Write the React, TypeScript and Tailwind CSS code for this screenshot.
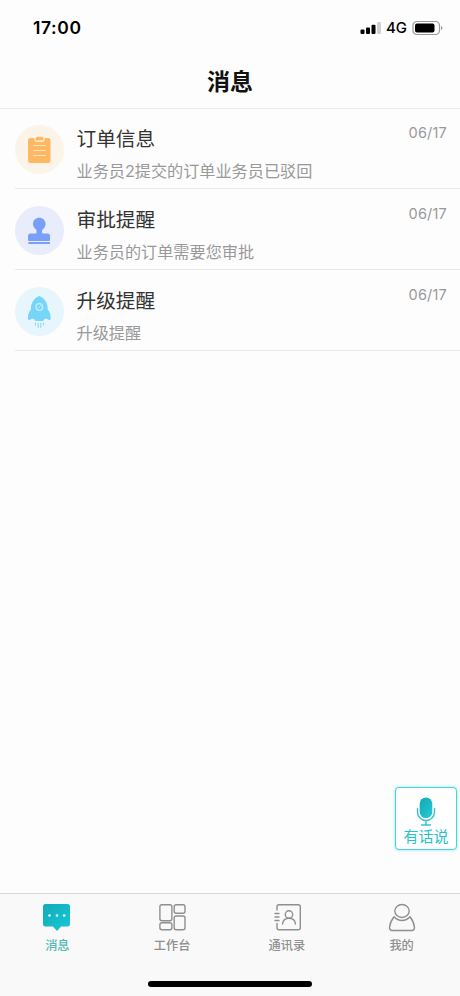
import React from 'react';

interface Message {
  title: string;
  summary: string;
  date: string;
  circle: string;
  icon: React.ReactNode;
}

interface TabProps {
  label: string;
  active?: boolean;
  children: React.ReactNode;
}

const OrderIcon = () => (
  <svg width="49" height="49" viewBox="0 0 49 49" fill="none">
    <rect x="13" y="13" width="22.500" height="25" rx="2.500" fill="#fdb863" />
    <path d="M20 12.500v2.200q0 1.500 1.500 1.500h6q1.500 0 1.500-1.500V12.500" stroke="#fdf4e6" strokeWidth="1.200" />
    <rect x="21" y="11.800" width="7" height="3" rx="1" fill="#fdb863" />
    <path d="M18.500 20.500h12M18.500 25.500h12M18.500 30.500h12" stroke="#fee3bd" strokeWidth="1.200" strokeLinecap="round" />
  </svg>
);

const StampIcon = () => (
  <svg width="49" height="49" viewBox="0 0 49 49" fill="#7a9ffa">
    <path d="M24.300 11.800c-3.600 0-6.300 2.700-6.300 6.200 0 2.400 1.300 4.100 2.700 5.200.9.800 1.100 1.700.8 2.700l-.3 1.600H15.500a2.500 2.500 0 0 0-2.500 2.500V34q0 1 1 1H34q1 0 1-1v-4a2.500 2.500 0 0 0-2.500-2.500h-5.100l-.3-1.600c-.3-1-.1-1.900.8-2.700 1.400-1.100 2.700-2.800 2.700-5.200 0-3.500-2.700-6.200-6.300-6.200z" />
    <rect x="13.300" y="36" width="21.700" height="2" rx=".5" />
  </svg>
);

const RocketIcon = () => (
  <svg width="49" height="49" viewBox="0 0 49 49" fill="none">
    <path
      d="M24.300 9c-4.600 1.800-8.300 6.300-8.400 12v1.500c-2 2.200-3 5.200-3 8.500 0 1.700.9 2.600 2.100 1.700 1.200-1 2.400-1.300 3.700-.9l1.800 2.200h7.600l1.800-2.200c1.300-.4 2.500-.1 3.700.9 1.200.9 2.100 0 2.100-1.700 0-3.300-1-6.300-3-8.500V21c-.1-5.700-3.800-10.200-8.400-12z"
      fill="#78d5fa"
    />
    <circle cx="24.300" cy="20" r="3.300" stroke="#c5effc" strokeWidth="1.300" />
    <path d="m22.700 21.500 3.300-3" stroke="#b4e9fb" />
    <path d="M20.400 36v2M23.200 36v4.300M25.800 36v4.300M28.500 36v2" stroke="#8edcf8" strokeWidth="1.200" strokeLinecap="round" />
  </svg>
);

const messages: Message[] = [
  {
    title: '订单信息',
    summary: '业务员2提交的订单业务员已驳回',
    date: '06/17',
    circle: 'bg-[#fcf4e8]',
    icon: <OrderIcon />,
  },
  {
    title: '审批提醒',
    summary: '业务员的订单需要您审批',
    date: '06/17',
    circle: 'bg-[#e8ecfb]',
    icon: <StampIcon />,
  },
  {
    title: '升级提醒',
    summary: '升级提醒',
    date: '06/17',
    circle: 'bg-[#e7f6fd]',
    icon: <RocketIcon />,
  },
];

const StatusBar = () => (
  <div className="flex h-14 shrink-0 items-center justify-between pl-[33px] pr-[17px] font-['Inter'] text-black">
    <span className="text-[17.500px] font-semibold tracking-[0.600px]">17:00</span>
    <div className="flex items-center">
      <svg width="21" height="14" viewBox="0 0 21 14">
        <rect x="0.500" y="8.500" width="4" height="4.500" rx="1" />
        <rect x="6" y="6.500" width="4" height="6.500" rx="1" />
        <rect x="11.500" y="3.800" width="4" height="9.200" rx="1" />
        <rect x="17" y="1" width="4" height="12" rx="1" fill="#cfcfcf" />
      </svg>
      <span className="ml-[5px] text-[15px] font-medium leading-5">4G</span>
      <svg className="ml-[5px]" width="31" height="16" viewBox="0 0 31 16" fill="none">
        <rect x="1" y="1.500" width="26.500" height="13" rx="4" stroke="#999" strokeWidth="1.200" />
        <rect x="3" y="3.500" width="19.500" height="9" rx="2" fill="#000" />
        <path d="M29 6v4q1.500-.6 1.500-2T29 6z" fill="#999" />
      </svg>
    </div>
  </div>
);

const MessageRow: React.FC<{ message: Message }> = ({ message }) => (
  <li className="ml-[15px] flex h-[81px] border-b border-[#e9e9e9] pr-[13px]">
    <div className={`mt-[17px] size-[49px] shrink-0 rounded-full ${message.circle}`}>{message.icon}</div>
    <div className="ml-[12.500px] min-w-0 flex-1 pt-[16px]">
      <h2 className="text-[19.700px] leading-7 text-[#333]">{message.title}</h2>
      <p className="mt-[7px] font-['Inter','Noto_Sans_CJK_SC',sans-serif] text-[16.150px] leading-6 text-[#999]">{message.summary}</p>
    </div>
    <time className="mt-[15px] font-['Inter'] text-[14.500px] leading-5 tracking-[0.200px] text-[#999]">{message.date}</time>
  </li>
);

const Tab: React.FC<TabProps> = ({ label, active, children }) => (
  <button className={`flex flex-1 flex-col items-center pt-2 ${active ? 'text-[#54bab5]' : 'text-[#8f8f8f]'}`}>
    {children}
    <span className="mt-[4px] text-[12.200px] font-medium leading-[18px]">{label}</span>
  </button>
);

export default function App() {
  return (
    <div className="relative flex h-[996px] w-[460px] flex-col overflow-hidden bg-[#fdfdfd] font-['Noto_Sans_CJK_SC',sans-serif]">
      <StatusBar />
      <header className="flex h-[53px] shrink-0 items-center justify-center border-b border-[#ebebeb] pb-1">
        <h1 className="text-[23px] font-bold text-[#111]">消息</h1>
      </header>
      <ul className="-mt-px flex-1">
        {messages.map((message) => (
          <MessageRow key={message.title} message={message} />
        ))}
      </ul>

      <button className="absolute left-[395px] top-[787px] flex h-[63px] w-[62px] flex-col items-center rounded-[4px] border-[1.500px] border-[#4bd2da] bg-white pt-[9px] text-[#26c2cb] shadow-[0_0_3px_#7de4e9]">
        <svg width="20" height="30" viewBox="0 0 20 30" fill="none">
          <defs>
            <linearGradient id="mic" x1="0" y1="0" x2="1" y2="1">
              <stop stopColor="#0fa9b5" />
              <stop offset="1" stopColor="#28c9d5" />
            </linearGradient>
          </defs>
          <rect x="3.700" y="0.500" width="12.600" height="20.500" rx="6.300" fill="url(#mic)" />
          <path d="M1.500 11.500v3.500a8.500 8.500 0 0 0 17 0v-3.500M10 23.500v4M5.500 28h9" stroke="#35c4cc" strokeWidth="1.400" strokeLinecap="round" />
        </svg>
        <span className="-mt-px text-[15px] leading-[19px]">有话说</span>
      </button>

      <nav className="flex h-[103px] shrink-0 flex-col justify-between border-t border-[#d6d6d6] bg-[#f9f9f9]">
        <div className="flex pr-px">
          <Tab label="消息" active>
            <svg width="30" height="30" viewBox="0 0 30 30">
              <defs>
                <linearGradient id="bubble" x1="0" y1="0" x2="1" y2="1">
                  <stop stopColor="#13aab7" />
                  <stop offset="1" stopColor="#16c9d8" />
                </linearGradient>
              </defs>
              <path d="M3.500 2h22a2.500 2.500 0 0 1 2.500 2.500v17.500a2.500 2.500 0 0 1-2.500 2.500H19l-4 4.500-4-4.500H3.500A2.500 2.500 0 0 1 1 22V4.500A2.500 2.500 0 0 1 3.500 2z" fill="url(#bubble)" />
              <g fill="#e8ffff">
                <circle cx="7.500" cy="13.500" r="1.300" />
                <circle cx="15" cy="13.500" r="1.300" />
                <circle cx="22.200" cy="13.500" r="1.300" />
              </g>
            </svg>
          </Tab>
          <Tab label="工作台">
            <svg width="30" height="30" viewBox="0 0 30 30" fill="none" stroke="currentColor" strokeWidth="1.400">
              <rect x="2.900" y="2.700" width="12" height="16" rx="2" />
              <rect x="17.200" y="2.700" width="10.800" height="8.500" rx="2" />
              <rect x="2.900" y="20.700" width="12" height="7" rx="2" />
              <rect x="17.200" y="14" width="10.800" height="13.700" rx="2" />
            </svg>
          </Tab>
          <Tab label="通讯录">
            <svg width="30" height="30" viewBox="0 0 30 30" fill="none" stroke="currentColor" strokeWidth="1.400" strokeLinecap="round">
              <path d="M5 8V4.700a2 2 0 0 1 2-2h19.300a2 2 0 0 1 2 2v21a2 2 0 0 1-2 2H7a2 2 0 0 1-2-2V21.500" />
              <path d="M3 11.500h4M3 15h4M3 18.500h4" />
              <circle cx="17" cy="12.500" r="3.700" />
              <path d="M10.500 22c.5-3.500 2.500-5.700 6.500-5.700s6 2.200 6.500 5.700" />
            </svg>
          </Tab>
          <Tab label="我的">
            <svg width="30" height="30" viewBox="0 0 30 30" fill="none" stroke="currentColor" strokeWidth="1.400" strokeLinejoin="round">
              <ellipse cx="15" cy="9" rx="7.200" ry="6.500" />
              <path d="M7 14.800Q3 20 2.500 25.500q0 3 2.500 3h20q2.500 0 2.500-3-.5-5.500-4.500-10.700-3.300 3.700-8 3.700t-8-3.700z" />
            </svg>
          </Tab>
        </div>
        <div className="mb-[9px] ml-[148px] h-[6px] w-[164px] rounded-full bg-black" />
      </nav>
    </div>
  );
}
